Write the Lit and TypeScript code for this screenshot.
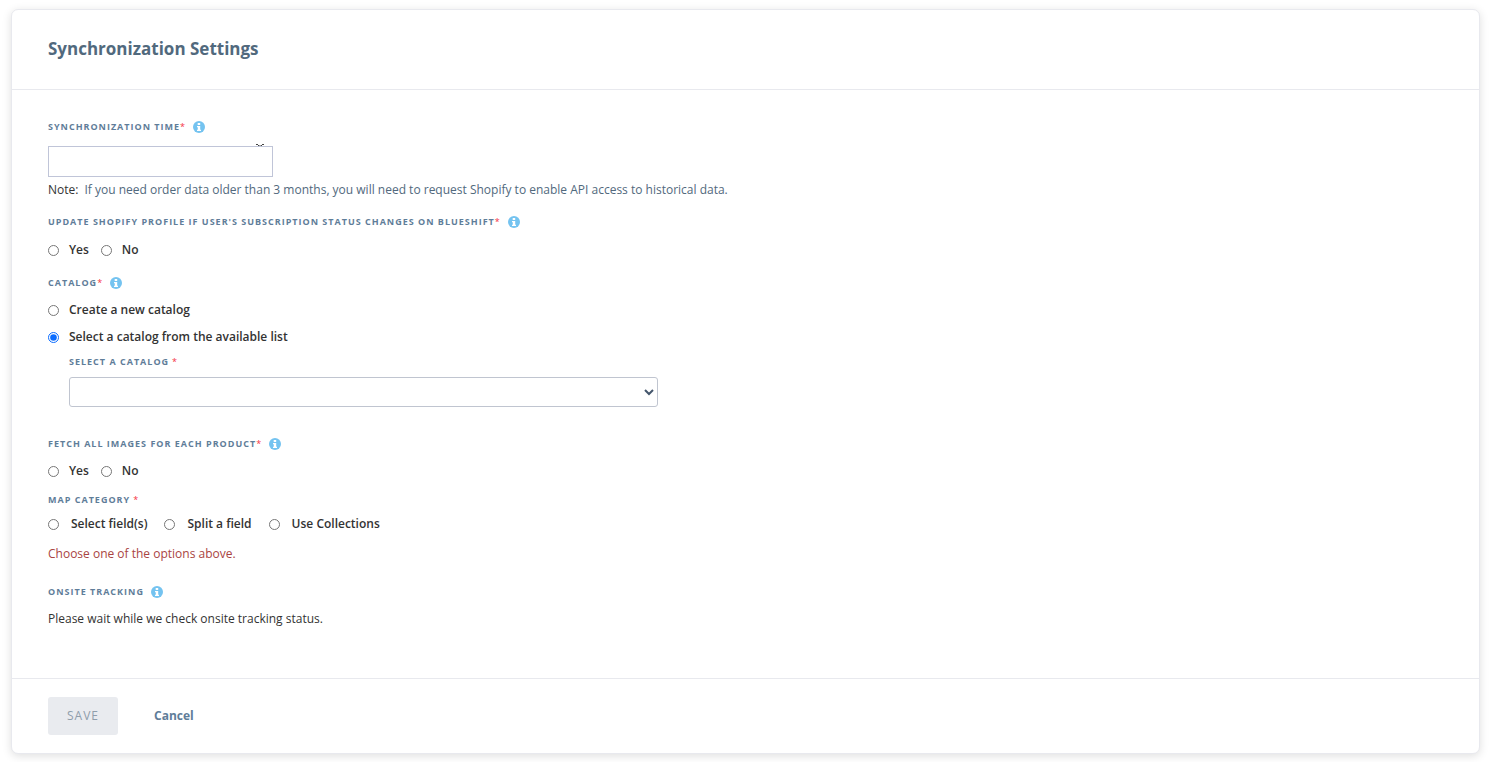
import { LitElement, html, css, nothing } from "lit";
import { customElement, state } from "lit/decorators.js";

const infoIcon = html`<svg class="info" viewBox="0 0 12 12" role="img" aria-label="More information">
  <circle cx="6" cy="6" r="6" fill="#74c3f0" />
  <path d="M4.700 2h2.500v2H4.700zM4 5h3.200v3.800H8V10H4V8.800h.800V6.200H4z" fill="#fff" />
</svg>`;

@customElement("app-root")
export class AppRoot extends LitElement {
  static styles = css`
    :host {
      display: block;
      box-sizing: border-box;
      min-height: 100vh;
      padding: 9px 10px 8px 11px;
      background: #fff;
      color: #333;
      font: 12px/20px "Open Sans", "Noto Sans", sans-serif;
    }
    * { box-sizing: border-box; }
    .card {
      border: 1px solid #e8e9ee;
      border-radius: 7px;
      background: #fff;
      box-shadow: 0 2px 10px rgba(0, 0, 0, 0.13);
    }
    .header { padding: 26px 36px 28px; border-bottom: 1px solid #e8e9ee; }
    h1 { margin: 0; font-size: 17px; line-height: 25px; font-weight: 700; color: #51697d; }
    .body { padding: 29px 36px 49px; }
    fieldset { min-width: 0; margin: 0; padding: 0; border: 0; }
    legend { padding: 0; }
    .caption {
      display: flex;
      align-items: center;
      height: 16px;
      font-size: 9px;
      line-height: 16px;
      font-weight: 700;
      letter-spacing: 1px;
      text-transform: uppercase;
      color: #5f7d99;
    }
    .required { color: #f5333f; font-weight: 400; }
    .spaced { margin-left: 3px; }
    .info { width: 12px; height: 12px; margin-left: 7px; }
    .time-wrap { position: relative; width: 225px; margin-top: 11px; }
    .time {
      display: block;
      width: 100%;
      height: 31px;
      padding: 4px 8px;
      border: 1px solid #c0c5d8;
      border-radius: 0;
      background: #fff;
      font: inherit;
    }
    .peek { position: absolute; top: -2px; right: 9px; width: 8px; height: 2px; }
    .note { margin: 3px 0 14px; color: #51697d; }
    .note-title { margin-right: 6px; color: #333; }
    .options { display: flex; gap: 12px; margin-top: 10px; }
    .options.stacked { flex-direction: column; gap: 7px; margin-top: 9px; }
    .options.wide { gap: 17px; margin-top: 6px; }
    .option { display: flex; align-items: center; gap: 10px; font-weight: 600; }
    .wide .option { gap: 12px; }
    input[type="radio"] { width: 11px; height: 11px; margin: 0; accent-color: #0a6cff; }
    .group { margin-top: 15px; }
    .nested { width: 610px; max-width: 100%; padding-left: 21px; margin-top: 7px; }
    .select-wrap { position: relative; margin-top: 7px; }
    select {
      display: block;
      width: 100%;
      height: 30px;
      padding: 0 24px 0 8px;
      border: 1px solid #c0c5d0;
      border-radius: 3px;
      background: #fff;
      appearance: none;
      font: inherit;
    }
    .chevron { position: absolute; right: 4px; top: 12px; width: 10px; height: 7px; pointer-events: none; }
    .images { margin-top: 29px; }
    .images .options { margin-top: 9px; }
    .category { margin-top: 11px; }
    .error { margin: 10px 0 20px; color: #a94442; }
    .status { margin: 9px 0 0; }
    .footer {
      display: flex;
      align-items: center;
      gap: 36px;
      padding: 18px 36px;
      border-top: 1px solid #e8e9ee;
    }
    button { border: 0; font: inherit; }
    .save {
      width: 70px;
      height: 38px;
      padding: 0;
      border-radius: 3px;
      background: #e9ebef;
      color: #8f9dab;
      letter-spacing: 1px;
    }
    .cancel { padding: 0; background: none; color: #5f7d99; font-weight: 700; }
  `;

  @state() private catalogMode = "existing";

  private option(name: string, value: string, text: string, checked = false) {
    return html`<label class="option">
      <input type="radio" name=${name} value=${value} .checked=${checked}
        @change=${() => { if (name === "catalog") this.catalogMode = value; }} />
      <span>${text}</span>
    </label>`;
  }

  render() {
    const star = html`<span class="required">*</span>`;
    return html`<form class="card" @submit=${(e: Event) => e.preventDefault()}>
      <header class="header"><h1>Synchronization Settings</h1></header>
      <div class="body">
        <div class="caption"><label for="time">Synchronization time${star}</label>${infoIcon}</div>
        <div class="time-wrap">
          <input class="time" id="time" type="text" />
          <svg class="peek" viewBox="0 0 8 2" aria-hidden="true">
            <path d="M0 .5h2M6 .5h2M2 1.5h1.500M4.500 1.5h1.500" stroke="#444" fill="none" />
          </svg>
        </div>
        <p class="note"><span class="note-title">Note:</span>If you need order data older than 3 months, you will need to request Shopify to enable API access to historical data.</p>

        <fieldset>
          <legend class="caption"><span>Update Shopify profile if user's subscription status changes on Blueshift${star}</span>${infoIcon}</legend>
          <div class="options">${this.option("profile", "yes", "Yes")}${this.option("profile", "no", "No")}</div>
        </fieldset>

        <fieldset class="group">
          <legend class="caption"><span>Catalog${star}</span>${infoIcon}</legend>
          <div class="options stacked">
            ${this.option("catalog", "new", "Create a new catalog", this.catalogMode === "new")}
            ${this.option("catalog", "existing", "Select a catalog from the available list", this.catalogMode === "existing")}
          </div>
          ${this.catalogMode === "existing" ? html`<div class="nested">
            <label class="caption" for="catalog">Select a catalog<span class="required spaced">*</span></label>
            <div class="select-wrap">
              <select id="catalog"><option value=""></option></select>
              <svg class="chevron" viewBox="0 0 10 7" aria-hidden="true">
                <path d="M1 1l4 4 4-4" fill="none" stroke="#44566c" stroke-width="2" />
              </svg>
            </div>
          </div>` : nothing}
        </fieldset>

        <fieldset class="images">
          <legend class="caption"><span>Fetch all images for each product${star}</span>${infoIcon}</legend>
          <div class="options">${this.option("images", "yes", "Yes")}${this.option("images", "no", "No")}</div>
        </fieldset>

        <fieldset class="category">
          <legend class="caption">Map category<span class="required spaced">*</span></legend>
          <div class="options wide">
            ${this.option("category", "select", "Select field(s)")}
            ${this.option("category", "split", "Split a field")}
            ${this.option("category", "collections", "Use Collections")}
          </div>
        </fieldset>
        <p class="error">Choose one of the options above.</p>

        <div class="caption"><span>Onsite tracking</span>${infoIcon}</div>
        <p class="status">Please wait while we check onsite tracking status.</p>
      </div>
      <footer class="footer">
        <button class="save" type="submit" disabled>SAVE</button>
        <button class="cancel" type="button">Cancel</button>
      </footer>
    </form>`;
  }
}
